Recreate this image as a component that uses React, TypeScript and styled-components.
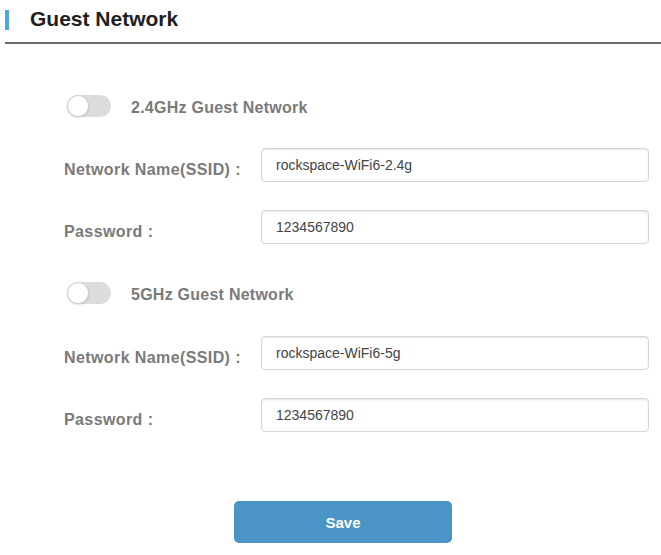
import React from "react";
import styled, { createGlobalStyle } from "styled-components";

const GlobalStyle = createGlobalStyle`
  html, body {
    margin: 0;
    padding: 0;
    background: #fff;
  }
  body {
    font-family: "Liberation Sans", Arial, Helvetica, sans-serif;
  }
`;

const Page = styled.div`
  width: 661px;
  padding-left: 5px;
  box-sizing: border-box;
`;

const Header = styled.div`
  display: flex;
  align-items: center;
  gap: 21px;
  padding-top: 10px;
  padding-bottom: 12px;
  border-bottom: 2px solid #6a6a6a;
`;

const AccentBar = styled.div`
  width: 4px;
  height: 20px;
  background-color: #4aa8dc;
`;

const Title = styled.h1`
  margin: -3px 0 0;
  font-size: 21px;
  line-height: 18px;
  font-weight: bold;
  color: #1e1e1e;
`;

const Form = styled.div`
  display: flex;
  flex-direction: column;
  padding: 51px 12px 0 59px;
`;

const Section = styled.div<{ $first?: boolean }>`
  display: flex;
  flex-direction: column;
  gap: 28px;
  margin-top: ${({ $first }) => ($first ? "0" : "38px")};
`;

const ToggleRow = styled.div<{ $first?: boolean }>`
  display: flex;
  align-items: center;
  gap: 20px;
  padding-left: 3px;
  margin-bottom: ${({ $first }) => ($first ? "3px" : "4px")};
`;

const Track = styled.div<{ $on?: boolean }>`
  position: relative;
  width: 44px;
  height: 22px;
  border-radius: 11px;
  background-color: ${({ $on }) => ($on ? "#4a94c6" : "#dcdcdc")};
`;

const Knob = styled.div<{ $on?: boolean }>`
  position: absolute;
  top: 0;
  left: ${({ $on }) => ($on ? "22px" : "0")};
  width: 22px;
  height: 22px;
  border-radius: 50%;
  background: #fff;
  box-sizing: border-box;
  border: 1px solid #d0d0d0;
  box-shadow: 0 1px 2px rgba(0, 0, 0, 0.12);
`;

const ToggleLabel = styled.span`
  padding-top: 3px;
  font-size: 16px;
  line-height: 18px;
  letter-spacing: 0.25px;
  font-weight: bold;
  color: #7a7a7a;
`;

const FieldRow = styled.div`
  display: flex;
  align-items: center;
`;

const FieldLabel = styled.label`
  width: 197px;
  flex-shrink: 0;
  padding-top: 9px;
  font-size: 16px;
  line-height: 18px;
  letter-spacing: 0.4px;
  font-weight: bold;
  color: #7a7a7a;
`;

const Input = styled.input`
  flex: 1;
  height: 34px;
  box-sizing: border-box;
  padding: 0 14px;
  border: 1px solid #d6d6d6;
  border-radius: 4px;
  box-shadow: inset 0 1px 2px rgba(0, 0, 0, 0.1);
  font-family: "Liberation Sans", Arial, sans-serif;
  font-size: 14px;
  color: #444;
  outline: none;
`;

const ButtonRow = styled.div`
  display: flex;
  padding: 69px 0 0 229px;
`;

const SaveButton = styled.button`
  width: 218px;
  height: 42px;
  border: none;
  border-radius: 5px;
  background-color: #4a94c6;
  color: #fff;
  font-family: "Liberation Sans", Arial, sans-serif;
  font-size: 15px;
  font-weight: bold;
  cursor: pointer;
`;

type Band = { name: string; ssid: string; password: string };

const bands: Band[] = [
  { name: "2.4GHz Guest Network", ssid: "rockspace-WiFi6-2.4g", password: "1234567890" },
  { name: "5GHz Guest Network", ssid: "rockspace-WiFi6-5g", password: "1234567890" },
];

export default function App() {
  return (
    <>
      <GlobalStyle />
      <Page>
        <Header>
          <AccentBar />
          <Title>Guest Network</Title>
        </Header>
        <Form>
          {bands.map((b, i) => (
            <Section key={b.name} $first={i === 0}>
              <ToggleRow $first={i === 0}>
                <Track>
                  <Knob />
                </Track>
                <ToggleLabel>{b.name}</ToggleLabel>
              </ToggleRow>
              <FieldRow>
                <FieldLabel>Network Name(SSID) :</FieldLabel>
                <Input defaultValue={b.ssid} />
              </FieldRow>
              <FieldRow>
                <FieldLabel>Password :</FieldLabel>
                <Input defaultValue={b.password} />
              </FieldRow>
            </Section>
          ))}
        </Form>
        <ButtonRow>
          <SaveButton>Save</SaveButton>
        </ButtonRow>
      </Page>
    </>
  );
}
